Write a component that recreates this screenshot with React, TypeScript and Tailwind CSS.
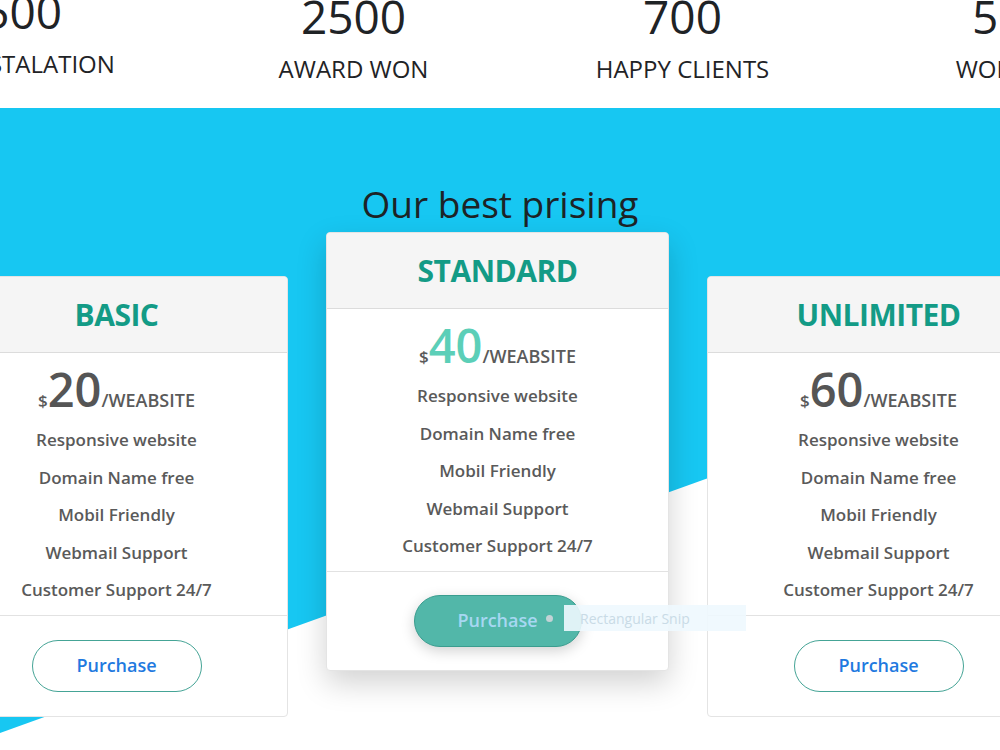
import React from "react";

type Plan = {
    name: string;
    price: number;
    featured?: boolean;
};

const plans: Plan[] = [
    { name: "BASIC", price: 20 },
    { name: "STANDARD", price: 40, featured: true },
    { name: "UNLIMITED", price: 60 },
];

const features = [
    "Responsive website",
    "Domain Name free",
    "Mobil Friendly",
    "Webmail Support",
    "Customer Support 24/7",
];

const stats = [
    { value: "1500", label: "INSTALATION", first: true },
    { value: "2500", label: "AWARD WON" },
    { value: "700", label: "HAPPY CLIENTS" },
    { value: "500", label: "WORKERS" },
];

function PlanCard({ plan }: { plan: Plan }) {
    return (
        <div
            className={
                plan.featured
                    ? "relative z-10 flex h-[439px] w-[343px] shrink-0 flex-col rounded-[4px] border border-[#e4e4e4] bg-white shadow-[0_12px_30px_rgba(0,0,0,0.18)]"
                    : "mt-[44px] flex h-[441px] w-[343px] shrink-0 flex-col rounded-[4px] border border-[#e4e4e4] bg-white"
            }
        >
            <div className="flex h-[76px] items-center justify-center rounded-t-[4px] border-b border-[#dcdcdc] bg-[#f5f5f5]">
                <h3 className="text-[30px] font-bold tracking-[-0.5px] text-[#139b86]">{plan.name}</h3>
            </div>

            <div className="pt-[8px] pb-[6px] text-center text-[#5a5a5a]">
                <div className="flex h-[60px] items-baseline justify-center pt-[5px]">
                    <span className="text-[17px] font-semibold">$</span>
                    <span
                        className={
                            plan.featured
                                ? "text-[47px] leading-none font-semibold text-[#5ccfb8]"
                                : "text-[47px] leading-none font-semibold text-[#555]"
                        }
                    >
                        {plan.price}
                    </span>
                    <span className="text-[18px] font-semibold">/WEABSITE</span>
                </div>
                {features.map((f) => (
                    <p key={f} className="h-[37.5px] text-[17px] leading-[37.5px] font-semibold">
                        {f}
                    </p>
                ))}
            </div>

            <div className="flex flex-1 items-center justify-center border-t border-[#e2e2e2]">
                {plan.featured ? (
                    <button className="h-[52px] w-[168px] rounded-full border-[1.5px] border-[#3a9d8f] bg-[#52b7a9] text-[18px] font-semibold text-[#a7d7f2] shadow-[0_4px_14px_rgba(0,0,0,0.18)]">
                        Purchase
                    </button>
                ) : (
                    <button className="h-[52px] w-[170px] rounded-full border-[1.5px] border-[#45a496] bg-white text-[18px] font-semibold text-[#1f7ae0]">
                        Purchase
                    </button>
                )}
            </div>

            {plan.featured && (
                <>
                    {/* snip tool hint floating over the button */}
                    <span className="absolute top-[382px] left-[219px] h-[7px] w-[7px] rounded-full bg-[#c3d3d6]" />
                    <div className="absolute top-[372px] left-[237px] flex h-[26px] w-[182px] items-center bg-[#eef8fe]/90 pl-[16px] text-[14px] whitespace-nowrap text-[#c9dbe6]">
                        Rectangular Snip
                    </div>
                </>
            )}
        </div>
    );
}

export default function App() {
    return (
        <div className="h-[750px] w-[1000px] overflow-hidden bg-white font-['Open_Sans',sans-serif]">
            <section className="h-[108px]">
                <div className="-ml-[140px] flex">
                    {stats.map((s) => (
                        <div
                            key={s.label}
                            className={
                                s.first
                                    ? "-mt-[5px] flex w-[329px] shrink-0 flex-col items-center text-[#1f2326]"
                                    : "flex w-[329px] shrink-0 flex-col items-center text-[#1f2326]"
                            }
                        >
                            <span className={s.first ? "-mt-[8px] mr-[30px] text-[46px] leading-[48px]" : "-mt-[8px] text-[46px] leading-[48px]"}>
                                {s.value}
                            </span>
                            <span
                                className={
                                    s.first
                                        ? "mt-[14px] ml-[30px] text-[24px] leading-[30px] font-medium"
                                        : "mt-[14px] text-[24px] leading-[30px] font-medium"
                                }
                            >
                                {s.label}
                            </span>
                        </div>
                    ))}
                </div>
            </section>

            <section className="relative h-[642px]">
                <div className="absolute inset-0 bg-[#17c7f2] [clip-path:polygon(0_0,100%_0,100%_265px,0_625px)]" />
                <div className="relative">
                    <h2 className="pt-[72px] text-center text-[37px] leading-[48px] font-medium text-[#1d2326]">Our best prising</h2>
                    <div className="-ml-[55px] mt-[4px] flex items-start gap-[38px]">
                        {plans.map((p) => (
                            <PlanCard key={p.name} plan={p} />
                        ))}
                    </div>
                </div>
            </section>
        </div>
    );
}
